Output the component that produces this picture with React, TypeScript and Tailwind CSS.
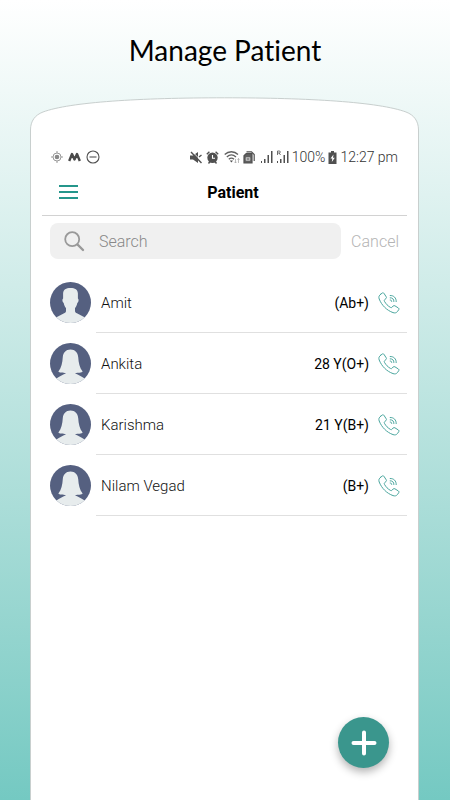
import React from "react";

type Patient = { name: string; detail: string; avatar: "male" | "female" };

const patients: Patient[] = [
  { name: "Amit", detail: "(Ab+)", avatar: "male" },
  { name: "Ankita", detail: "28 Y(O+)", avatar: "female" },
  { name: "Karishma", detail: "21 Y(B+)", avatar: "female" },
  { name: "Nilam Vegad", detail: "(B+)", avatar: "female" },
];

function Avatar({ kind }: { kind: Patient["avatar"] }) {
  return (
    <svg viewBox="0 0 41 41" className="size-[41px] shrink-0 rounded-full" aria-hidden="true">
      <rect width="41" height="41" fill="#556080" />
      {kind === "male" ? (
        <path
          fill="#e7eced"
          d="M20.5 6C25 6 27.8 7.6 27.9 11.5V16.5C29 17 28.8 20.2 27.3 21C26.8 23.4 26 25 25 26V29C25 30.2 25.8 30.8 27.4 31.6L35 35.6V41H6V35.6L13.6 31.6C15.2 30.8 16 30.2 16 29V26C15 25 14.2 23.4 13.7 21C12.2 20.2 12 17 13.1 16.5V11.5C13.2 7.6 16 6 20.5 6Z"
        />
      ) : (
        <path
          fill="#e7eced"
          d="M20.5 6.6C25.2 6.6 27.8 9.8 28.2 14C28.6 20 29.6 24.6 32.6 28.6C32 29.8 27.4 30 25.4 30V30.6C28.4 31.8 31.4 33.4 34.6 35.6V41H6.4V35.6C9.6 33.4 12.6 31.8 15.6 30.6V30C13.6 30 9 29.8 8.4 28.6C11.4 24.6 12.4 20 12.8 14C13.2 9.8 15.8 6.6 20.5 6.6Z"
        />
      )}
    </svg>
  );
}

function CallIcon() {
  return (
    <svg viewBox="0 0 22 22" className="size-[22px]" fill="none" stroke="#4aa69e" strokeWidth="1" strokeLinecap="round" strokeLinejoin="round" aria-hidden="true">
      <path d="M2.6 2.3L4.3 1C5 .6 5.6 .8 6 1.4L8.2 4.8C8.6 5.5 8.5 6.1 7.9 6.6L6.8 7.5C6.2 8 6.1 8.7 6.5 9.4C8 12 9.8 13.9 12.4 15.4C13.1 15.8 13.7 15.7 14.2 15.1L15.1 14C15.6 13.5 16.2 13.4 16.9 13.8L20.4 16C21 16.4 21.1 17 20.8 17.6L19.4 19.6C18.4 20.9 16.8 21.2 15 20.6C8.7 18.3 3.7 13.3 1.2 7C.5 5 .9 3.5 2.6 2.3Z" />
      <path d="M12.2 3.5C15.8 3.3 18.4 5.9 18.2 9.6M12.2 5.8C14.5 5.7 16 7.2 15.9 9.5M12.2 8C13.2 8 13.7 8.5 13.7 9.4" />
    </svg>
  );
}

function Signal({ roaming = false }: { roaming?: boolean }) {
  return (
    <svg viewBox="0 0 13 14" className="h-[14px] w-[13px]" fill="#505050" aria-hidden="true">
      <rect x="1" y="11" width="1" height="2" />
      <rect x="4" y="9" width="1.5" height="4" />
      <rect x="7.5" y="5" width="1.5" height="8" />
      <rect x="11" y="1" width="1.5" height="12" />
      {roaming && <path d="M1.5 5V1H3.2C4.8 1 4.8 3 3.2 3H1.5M3.2 3L4.5 5" fill="none" stroke="#505050" strokeWidth=".8" />}
    </svg>
  );
}

function StatusBar() {
  return (
    <div className="flex h-5 items-center justify-between px-[9px] text-[14px] leading-5 text-[#333]">
      <div className="flex items-center gap-[5px]">
        <svg viewBox="0 0 12 12" className="size-3" fill="none" stroke="#999" aria-hidden="true">
          <circle cx="6" cy="6" r="4" />
          <circle cx="6" cy="6" r="2.3" fill="#888" stroke="none" />
          <path d="M6 0V2M6 10V12M0 6H2M10 6H12" />
        </svg>
        <svg viewBox="0 0 13 10" className="h-[10px] w-[13px]" fill="none" stroke="#4a4a4a" strokeWidth="2.4" strokeLinejoin="round" aria-hidden="true">
          <path d="M1.2 9L4 2L6.5 7.5L9 2L11.8 9" />
        </svg>
        <svg viewBox="0 0 14 14" className="size-[14px]" fill="none" stroke="#505050" strokeWidth="1.1" aria-hidden="true">
          <circle cx="7" cy="7" r="6" />
          <path d="M3.5 7H10.5" stroke="#777" strokeWidth="1.4" />
        </svg>
      </div>
      <div className="flex items-center gap-[3px]">
        <svg viewBox="0 0 12 13" className="mr-px h-[13px] w-3" fill="#505050" aria-hidden="true">
          <path d="M0 4.5H3L8 1V12L3 8.5H0Z" />
          <path d="M2.4 .8L12 10.6" stroke="#fff" strokeWidth="1" />
          <path d="M1 1L11.5 12M9 6L11.5 4" stroke="#505050" strokeWidth="1.4" />
        </svg>
        <svg viewBox="0 0 13 13" className="size-[13px]" aria-hidden="true">
          <path d="M.8 3.2L3.4 .8M12.2 3.2L9.6 .8M2.5 12.5L4 10.5M10.5 12.5L9 10.5" stroke="#505050" strokeWidth="1.4" />
          <circle cx="6.5" cy="6.8" r="5.2" fill="#505050" />
          <path d="M6.5 4V7.2H9" stroke="#fff" strokeWidth="1.1" fill="none" />
        </svg>
        <svg viewBox="0 0 16 14" className="ml-[2px] h-[14px] w-4" fill="none" stroke="#606060" strokeWidth="1.3" aria-hidden="true">
          <path d="M.7 4.5C4.5 .8 10.3 .8 14 4.5M2.8 6.9C5.5 4.4 9.2 4.4 12 6.9M4.8 9.3C6.4 7.8 8.4 7.8 10 9.3" />
          <path d="M5.8 10.6L7.4 12.4L9 10.6Z" fill="#505050" stroke="none" />
          <path d="M11.5 9V13M10.4 11.8L11.5 13L12.6 11.8M14.5 13V8.5M13.5 9.7L14.5 8.5L15.5 9.7" stroke="#aaa" strokeWidth=".8" />
        </svg>
        <svg viewBox="0 0 12 13" className="h-[13px] w-3" fill="none" stroke="#505050" strokeWidth="1.2" aria-hidden="true">
          <path d="M3.5 .8H8.5L11.2 3.5V10" />
          <path d="M1 4.8L3.2 2.7H9V12H1Z" fill="#606060" />
          <path d="M2.8 6.5H7.2V9.5H2.8Z" fill="#fff" stroke="none" />
          <path d="M4 7V9M6 7V9M4 8H6" strokeWidth=".8" />
        </svg>
        <div className="flex gap-[3px] pl-[2px]">
          <Signal />
          <Signal roaming />
        </div>
        <span className="font-light">100%</span>
        <svg viewBox="0 0 9 13" className="h-[13px] w-[9px]" aria-hidden="true">
          <path d="M3 0H6V1.5H8.5V13H.5V1.5H3Z" fill="#505050" />
          <path d="M5.5 3.5L2.5 7.5H4.3L3.8 11L6.8 6.8H5Z" fill="#fff" />
        </svg>
        <span className="font-light">12:27 pm</span>
      </div>
    </div>
  );
}

export default function App() {
  return (
    <div className="flex min-h-screen flex-col bg-linear-to-b from-white to-[#74c9c2] font-[Roboto,sans-serif]">
      <h1 className="flex h-[97px] items-center justify-center pt-[2px] text-center font-[Lato,sans-serif] text-[28px] leading-8 text-black [font-variant-ligatures:none]">
        Manage Patient
      </h1>

      <div className="ml-[30px] mr-[31px] flex flex-1 flex-col">
        <svg viewBox="0 0 389 36" preserveAspectRatio="none" className="h-9 w-full" aria-hidden="true">
          <path d="M.5 37V33C.5 24 5 18 13 15C40 5 110 .8 194.5 .8C279 .8 349 5 376 15C384 18 388.5 24 388.5 33V37" fill="#fff" stroke="#c8cfce" />
        </svg>

        <main className="relative flex-1 border-x border-[#c8cfce] bg-white px-[11px] pt-[14px]">
          <StatusBar />

          <header className="grid h-[49px] grid-cols-[40px_1fr_40px] items-center border-b border-[#d2d2d2] pl-[17px] pt-[2px]">
            <button type="button" aria-label="Menu" className="flex w-[19px] flex-col gap-[4px]">
              <span className="h-[2px] w-full bg-[#25968b]" />
              <span className="h-[2px] w-full bg-[#25968b]" />
              <span className="h-[2px] w-full bg-[#25968b]" />
            </button>
            <h2 className="pt-[2px] text-center text-[16px] font-bold leading-6 text-black">Patient</h2>
          </header>

          <div className="mt-[7px] flex h-9 items-center gap-[10px] px-2">
            <label className="flex h-full min-w-0 flex-1 items-center gap-[14px] rounded-lg bg-[#f0f0f0] pl-[14px]">
              <svg viewBox="0 0 21 21" className="size-[21px] shrink-0" fill="none" stroke="#999" strokeLinecap="round" aria-hidden="true">
                <circle cx="8.2" cy="8.2" r="7" strokeWidth="1.8" />
                <path d="M13.5 13.5L19 19" strokeWidth="2.4" />
              </svg>
              <input
                type="text"
                aria-label="Search"
                placeholder="Search"
                className="w-full min-w-0 bg-transparent pt-[2px] text-[16px] font-light leading-5 text-[#444] outline-none placeholder:text-[#888]"
              />
            </label>
            <button type="button" className="pt-[2px] text-[16px] font-light leading-5 text-[#b4b4b4]">
              Cancel
            </button>
          </div>

          <ul className="pt-[13px]">
            {patients.map((p) => (
              <li key={p.name} className="flex items-stretch gap-[5px] pl-2">
                <div className="flex h-[61px] items-center">
                  <Avatar kind={p.avatar} />
                </div>
                <div className="flex h-[61px] flex-1 items-center border-b border-[#e0e0e0] pl-[5px] pr-[7px] pt-[2px]">
                  <span className="flex-1 text-[15px] font-light leading-5 text-[#111]">{p.name}</span>
                  <span className="text-[14px] leading-5 text-black">{p.detail}</span>
                  <button type="button" aria-label={`Call ${p.name}`} className="ml-[9px]">
                    <CallIcon />
                  </button>
                </div>
              </li>
            ))}
          </ul>

          <button
            type="button"
            aria-label="Add patient"
            className="absolute bottom-8 right-[29px] flex size-[51px] items-center justify-center rounded-full bg-[#3a968d] shadow-[0_4px_8px_rgba(0,0,0,0.3)]"
          >
            <svg viewBox="0 0 26 26" className="size-[26px]" stroke="#fff" strokeWidth="4" strokeLinecap="round" aria-hidden="true">
              <path d="M13 2.5V23.5M2.5 13H23.5" />
            </svg>
          </button>
        </main>
      </div>
    </div>
  );
}
